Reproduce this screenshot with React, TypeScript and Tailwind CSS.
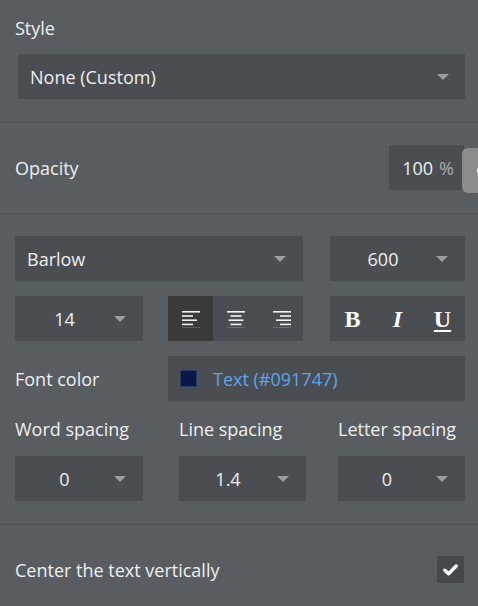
import React from "react";

const Caret = () => (
  <svg width="12" height="6" viewBox="0 0 12 6" className="shrink-0">
    <path d="M0 0h12L6 6z" fill="#9a9da1" />
  </svg>
);

function Select({ value, width, align = "center" }: { value: string; width: string; align?: "left" | "center" }) {
  return (
    <div className={`${width} shrink-0 h-[45px] bg-[#4a4e52] flex items-center pr-[17px]`}>
      <span className={`flex-1 ${align === "left" ? "text-left pl-[12px]" : "text-center"}`}>{value}</span>
      <Caret />
    </div>
  );
}

function AlignIcon({ kind }: { kind: "left" | "center" | "right" }) {
  const widths = [18, 11, 15, 11, 18];
  return (
    <svg width="18" height="18" viewBox="0 0 18 18">
      {widths.map((w, i) => {
        const x = kind === "left" ? 0 : kind === "right" ? 18 - w : (18 - w) / 2;
        return <rect key={i} x={x} y={1 + i * 4.2} width={w} height="1.6" fill="#f2f2f2" />;
      })}
    </svg>
  );
}

export default function App() {
  return (
    <div
      className="w-[478px] h-[606px] overflow-hidden bg-[#585d62] text-[#efefef] text-[18px] leading-[24px]"
      style={{ fontFamily: '"Open Sans", "DejaVu Sans", sans-serif' }}
    >
      {/* Style */}
      <div className="h-[123px] border-b border-[#4f5459] pt-[16px] pl-[15px]">
        <div>Style</div>
        <div className="mt-[14px] ml-[3px] w-[447px] h-[45px] bg-[#4a4e52] flex items-center pl-[12px] pr-[16px]">
          <span className="flex-1">None (Custom)</span>
          <Caret />
        </div>
      </div>

      {/* Opacity */}
      <div className="h-[91px] border-b border-[#4f5459] pt-[22px] pl-[15px] flex items-start">
        <div className="w-[374px] shrink-0 h-[45px] flex items-center">Opacity</div>
        <div className="w-[75px] shrink-0 h-[45px] bg-[#4a4e52] flex items-center justify-end pr-[10px] gap-[6px]">
          <span>100</span>
          <span className="text-[#a9acaf]">%</span>
        </div>
        <div className="-ml-[2px] mt-[3px] w-[40px] shrink-0 h-[45px] bg-[#8b8b8b] rounded-[6px] flex items-center pl-[15px]">
          <div className="w-[6px] h-[7px] bg-white rounded-l-full" />
        </div>
      </div>

      {/* Font */}
      <div className="h-[311px] border-b border-[#4f5459] pt-[22px] pl-[15px] flex flex-col">
        <div className="flex gap-[27px]">
          <Select value="Barlow" width="w-[288px]" align="left" />
          <Select value="600" width="w-[135px]" />
        </div>

        <div className="flex mt-[15px]">
          <Select value="14" width="w-[128px]" />
          <div className="ml-[25px] w-[135px] shrink-0 h-[45px] bg-[#4a4e52] flex">
            <div className="w-[45px] h-full bg-[#3a3a3a] flex items-center justify-center pl-[1px]">
              <AlignIcon kind="left" />
            </div>
            <div className="w-[45px] h-full flex items-center justify-center pl-[1px]">
              <AlignIcon kind="center" />
            </div>
            <div className="w-[45px] h-full flex items-center justify-center pl-[3px]">
              <AlignIcon kind="right" />
            </div>
          </div>
          <div
            className="ml-[27px] w-[135px] shrink-0 h-[45px] bg-[#4a4e52] flex text-[24px] text-white font-bold"
            style={{ fontFamily: '"Liberation Serif", "Times New Roman", serif' }}
          >
            <div className="w-[45px] flex items-center justify-center">B</div>
            <div className="w-[45px] flex items-center justify-center italic">I</div>
            <div className="w-[45px] flex items-center justify-center underline underline-offset-[3px] decoration-[2px]">U</div>
          </div>
        </div>

        <div className="flex mt-[15px] items-center">
          <div className="w-[153px] shrink-0">Font color</div>
          <div className="w-[297px] shrink-0 h-[45px] bg-[#4a4e52] flex items-center pl-[12px] gap-[16px]">
            <div className="w-[17px] h-[17px] bg-[#0b1747] border border-[#2c3a6a]" />
            <span className="text-[#5ca3ec]">Text (#091747)</span>
          </div>
        </div>

        <div className="flex mt-[16px]">
          <div className="w-[164px]">Word spacing</div>
          <div className="w-[159px]">Line spacing</div>
          <div>Letter spacing</div>
        </div>

        <div className="flex mt-[15px]">
          <Select value="0" width="w-[128px]" />
          <div className="ml-[36px]">
            <Select value="1.4" width="w-[127px]" />
          </div>
          <div className="ml-[32px]">
            <Select value="0" width="w-[127px]" />
          </div>
        </div>
      </div>

      {/* Center vertically */}
      <div className="pt-[31px] pl-[15px] pr-[14px] flex items-center">
        <div className="flex-1">Center the text vertically</div>
        <div className="w-[27px] h-[27px] bg-[#45494d] rounded-[2px] flex items-center justify-center">
          <svg width="15" height="12" viewBox="0 0 15 12">
            <path d="M1.8 6.2 L5.6 9.8 L13.2 2" fill="none" stroke="#ffffff" strokeWidth="3.4" strokeLinecap="round" strokeLinejoin="round" />
          </svg>
        </div>
      </div>
    </div>
  );
}
